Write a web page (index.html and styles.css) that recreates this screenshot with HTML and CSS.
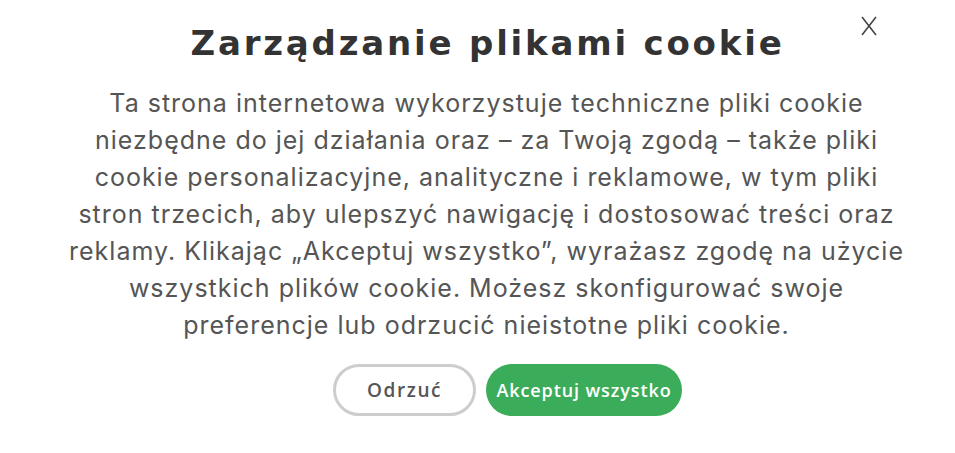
FILE: index.html
```html
<!DOCTYPE html>
<html lang="pl">
<head>
<meta charset="utf-8">
<link rel="stylesheet" href="styles.css">
</head>
<body>
<div class="modal">
  <button class="close" aria-label="Zamknij">
    <svg width="16" height="20" viewBox="0 0 16 20"><path d="M1 1 L15 19 M15 1 L1 19" stroke="#444" stroke-width="1.6" fill="none"/></svg>
  </button>
  <h1 class="title">Zarządzanie plikami cookie</h1>
  <p class="text">Ta strona internetowa wykorzystuje techniczne pliki cookie<br>niezbędne do jej działania oraz – za Twoją zgodą – także pliki<br>cookie personalizacyjne, analityczne i reklamowe, w tym pliki<br>stron trzecich, aby ulepszyć nawigację i dostosować treści oraz<br>reklamy. Klikając „Akceptuj wszystko”, wyrażasz zgodę na użycie<br>wszystkich plików cookie. Możesz skonfigurować swoje<br>preferencje lub odrzucić nieistotne pliki cookie.</p>
  <div class="actions">
    <button class="btn btn-reject">Odrzuć</button>
    <button class="btn btn-accept">Akceptuj wszystko</button>
  </div>
</div>
</body>
</html>
```
FILE: styles.css
```css
html, body { margin: 0; padding: 0; background: #fff; }
.modal {
  position: relative;
  width: 955px;
  height: 453px;
  display: flex;
  flex-direction: column;
  align-items: center;
  padding-top: 19px;
  box-sizing: border-box;
}
.close {
  position: absolute;
  top: 16px;
  left: 861px;
  padding: 0;
  border: 0;
  background: none;
  line-height: 0;
}
.title {
  margin: 0 0 0 20px;
  font-family: "DejaVu Sans", sans-serif;
  font-weight: 700;
  font-size: 34px;
  line-height: 48px;
  letter-spacing: 2.8px;
  color: #333;
}
.text {
  margin: 18px 0 0 18px;
  width: 920px;
  text-align: center;
  font-family: Inter, sans-serif;
  font-size: 25px;
  line-height: 37px;
  letter-spacing: 1px;
  color: #555;
}
.actions {
  display: flex;
  gap: 10px;
  margin: 20px 0 0 60px;
}
.btn {
  height: 52px;
  border-radius: 26px;
  font-family: "Open Sans", sans-serif;
  font-weight: 600;
  font-size: 18px;
  letter-spacing: 0.9px;
  padding: 0;
  box-sizing: border-box;
}
.btn-reject {
  width: 143px;
  border: 3px solid #cdcdcd;
  background: #fff;
  color: #555;
  font-size: 19px;
  letter-spacing: 1.6px;
}
.btn-accept {
  width: 196px;
  border: 0;
  background: #3bad5a;
  color: #fff;
}
```
